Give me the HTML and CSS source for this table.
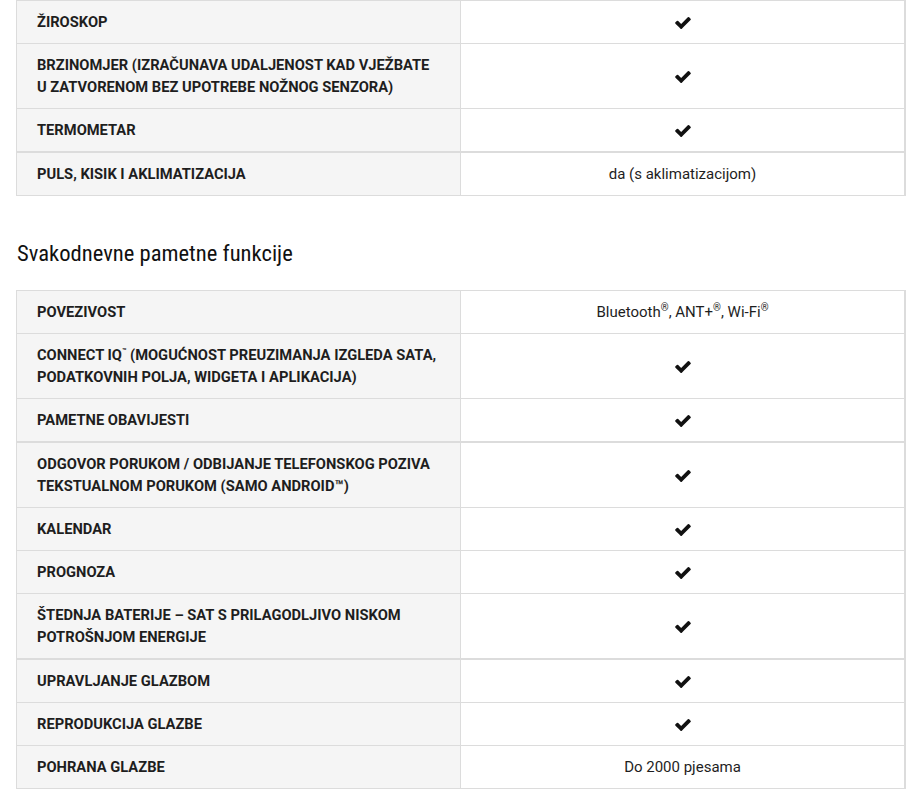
FILE: index.html
```html
<!DOCTYPE html>
<html lang="hr">
<head>
<meta charset="utf-8">
<title>Specifikacije</title>
<link rel="stylesheet" href="styles.css">
</head>
<body>
<div class="page">
  <table class="spec">
    <tbody>
      <tr><th>ŽIROSKOP</th><td><svg class="chk" viewBox="121 334 1550 1188"><path d="M1671 566q0 40-28 68l-724 724-136 136q-28 28-68 28t-68-28l-136-136-362-362q-28-28-28-68t28-68l136-136q28-28 68-28t68 28l294 295 656-657q28-28 68-28t68 28l136 136q28 28 28 68z"/></svg></td></tr>
      <tr><th>BRZINOMJER (IZRAČUNAVA UDALJENOST KAD VJEŽBATE<br>U ZATVORENOM BEZ UPOTREBE NOŽNOG SENZORA)</th><td><svg class="chk" viewBox="121 334 1550 1188"><path d="M1671 566q0 40-28 68l-724 724-136 136q-28 28-68 28t-68-28l-136-136-362-362q-28-28-28-68t28-68l136-136q28-28 68-28t68 28l294 295 656-657q28-28 68-28t68 28l136 136q28 28 28 68z"/></svg></td></tr>
      <tr><th>TERMOMETAR</th><td><svg class="chk" viewBox="121 334 1550 1188"><path d="M1671 566q0 40-28 68l-724 724-136 136q-28 28-68 28t-68-28l-136-136-362-362q-28-28-28-68t28-68l136-136q28-28 68-28t68 28l294 295 656-657q28-28 68-28t68 28l136 136q28 28 28 68z"/></svg></td></tr>
      <tr class="sep"><th>PULS, KISIK I AKLIMATIZACIJA</th><td>da (s aklimatizacijom)</td></tr>
    </tbody>
  </table>

  <h2 class="section-title">Svakodnevne pametne funkcije</h2>

  <table class="spec">
    <tbody>
      <tr><th>POVEZIVOST</th><td>Bluetooth<sup>®</sup>, ANT+<sup>®</sup>, Wi-Fi<sup>®</sup></td></tr>
      <tr><th>CONNECT IQ<sup class="tm">™</sup> (MOGUĆNOST PREUZIMANJA IZGLEDA SATA,<br>PODATKOVNIH POLJA, WIDGETA I APLIKACIJA)</th><td><svg class="chk" viewBox="121 334 1550 1188"><path d="M1671 566q0 40-28 68l-724 724-136 136q-28 28-68 28t-68-28l-136-136-362-362q-28-28-28-68t28-68l136-136q28-28 68-28t68 28l294 295 656-657q28-28 68-28t68 28l136 136q28 28 28 68z"/></svg></td></tr>
      <tr><th>PAMETNE OBAVIJESTI</th><td><svg class="chk" viewBox="121 334 1550 1188"><path d="M1671 566q0 40-28 68l-724 724-136 136q-28 28-68 28t-68-28l-136-136-362-362q-28-28-28-68t28-68l136-136q28-28 68-28t68 28l294 295 656-657q28-28 68-28t68 28l136 136q28 28 28 68z"/></svg></td></tr>
      <tr class="sep"><th>ODGOVOR PORUKOM / ODBIJANJE TELEFONSKOG POZIVA<br>TEKSTUALNOM PORUKOM (SAMO ANDROID™)</th><td><svg class="chk" viewBox="121 334 1550 1188"><path d="M1671 566q0 40-28 68l-724 724-136 136q-28 28-68 28t-68-28l-136-136-362-362q-28-28-28-68t28-68l136-136q28-28 68-28t68 28l294 295 656-657q28-28 68-28t68 28l136 136q28 28 28 68z"/></svg></td></tr>
      <tr><th>KALENDAR</th><td><svg class="chk" viewBox="121 334 1550 1188"><path d="M1671 566q0 40-28 68l-724 724-136 136q-28 28-68 28t-68-28l-136-136-362-362q-28-28-28-68t28-68l136-136q28-28 68-28t68 28l294 295 656-657q28-28 68-28t68 28l136 136q28 28 28 68z"/></svg></td></tr>
      <tr><th>PROGNOZA</th><td><svg class="chk" viewBox="121 334 1550 1188"><path d="M1671 566q0 40-28 68l-724 724-136 136q-28 28-68 28t-68-28l-136-136-362-362q-28-28-28-68t28-68l136-136q28-28 68-28t68 28l294 295 656-657q28-28 68-28t68 28l136 136q28 28 28 68z"/></svg></td></tr>
      <tr><th>ŠTEDNJA BATERIJE – SAT S PRILAGODLJIVO NISKOM<br>POTROŠNJOM ENERGIJE</th><td><svg class="chk" viewBox="121 334 1550 1188"><path d="M1671 566q0 40-28 68l-724 724-136 136q-28 28-68 28t-68-28l-136-136-362-362q-28-28-28-68t28-68l136-136q28-28 68-28t68 28l294 295 656-657q28-28 68-28t68 28l136 136q28 28 28 68z"/></svg></td></tr>
      <tr class="sep"><th>UPRAVLJANJE GLAZBOM</th><td><svg class="chk" viewBox="121 334 1550 1188"><path d="M1671 566q0 40-28 68l-724 724-136 136q-28 28-68 28t-68-28l-136-136-362-362q-28-28-28-68t28-68l136-136q28-28 68-28t68 28l294 295 656-657q28-28 68-28t68 28l136 136q28 28 28 68z"/></svg></td></tr>
      <tr><th>REPRODUKCIJA GLAZBE</th><td><svg class="chk" viewBox="121 334 1550 1188"><path d="M1671 566q0 40-28 68l-724 724-136 136q-28 28-68 28t-68-28l-136-136-362-362q-28-28-28-68t28-68l136-136q28-28 68-28t68 28l294 295 656-657q28-28 68-28t68 28l136 136q28 28 28 68z"/></svg></td></tr>
      <tr><th>POHRANA GLAZBE</th><td>Do 2000 pjesama</td></tr>
    </tbody>
  </table>
</div>
</body>
</html>
```

FILE: styles.css
```css
html, body {
  margin: 0;
  padding: 0;
  background: #fff;
}

.page {
  padding: 0 13px 0 16px;
  font-family: Roboto, "Liberation Sans", sans-serif;
  color: #1e1e1e;
}

.spec {
  width: 890px;
  border-collapse: collapse;
  border-left: 1px solid #dcdcdc;
  border-right: 2px solid #dcdcdc;
  font-size: 15px;
  line-height: 22px;
}

.spec th,
.spec td {
  border-top: 1px solid #dcdcdc;
  border-bottom: 1px solid #dcdcdc;
  padding: 10px 20px 10px 20px;
  vertical-align: middle;
}

.spec th {
  width: 444px;
  box-sizing: border-box;
  background: #f5f5f5;
  font-size: 14.7px;
  font-weight: 700;
  text-align: left;
  text-transform: uppercase;
  white-space: nowrap;
  border-right: 1px solid #dcdcdc;
}

.spec td {
  background: #fff;
  text-align: center;
  font-weight: 400;
}

.spec tr.sep th,
.spec tr.sep td {
  border-top: 2px solid #dcdcdc;
}

.spec sup {
  font-size: 10px;
  line-height: 0;
  vertical-align: 6px;
}

.spec sup.tm {
  font-size: 7px;
  vertical-align: 7px;
}

.chk {
  display: inline-block;
  width: 16px;
  height: 12px;
  vertical-align: middle;
  fill: #111;
}

.section-title {
  margin: 45px 0 23px 1px;
  font-family: "Roboto Condensed", "Liberation Sans Narrow", "DejaVu Sans Condensed", sans-serif;
  font-stretch: condensed;
  font-weight: 400;
  font-size: 22.6px;
  line-height: 26px;
  color: #111;
}
```
